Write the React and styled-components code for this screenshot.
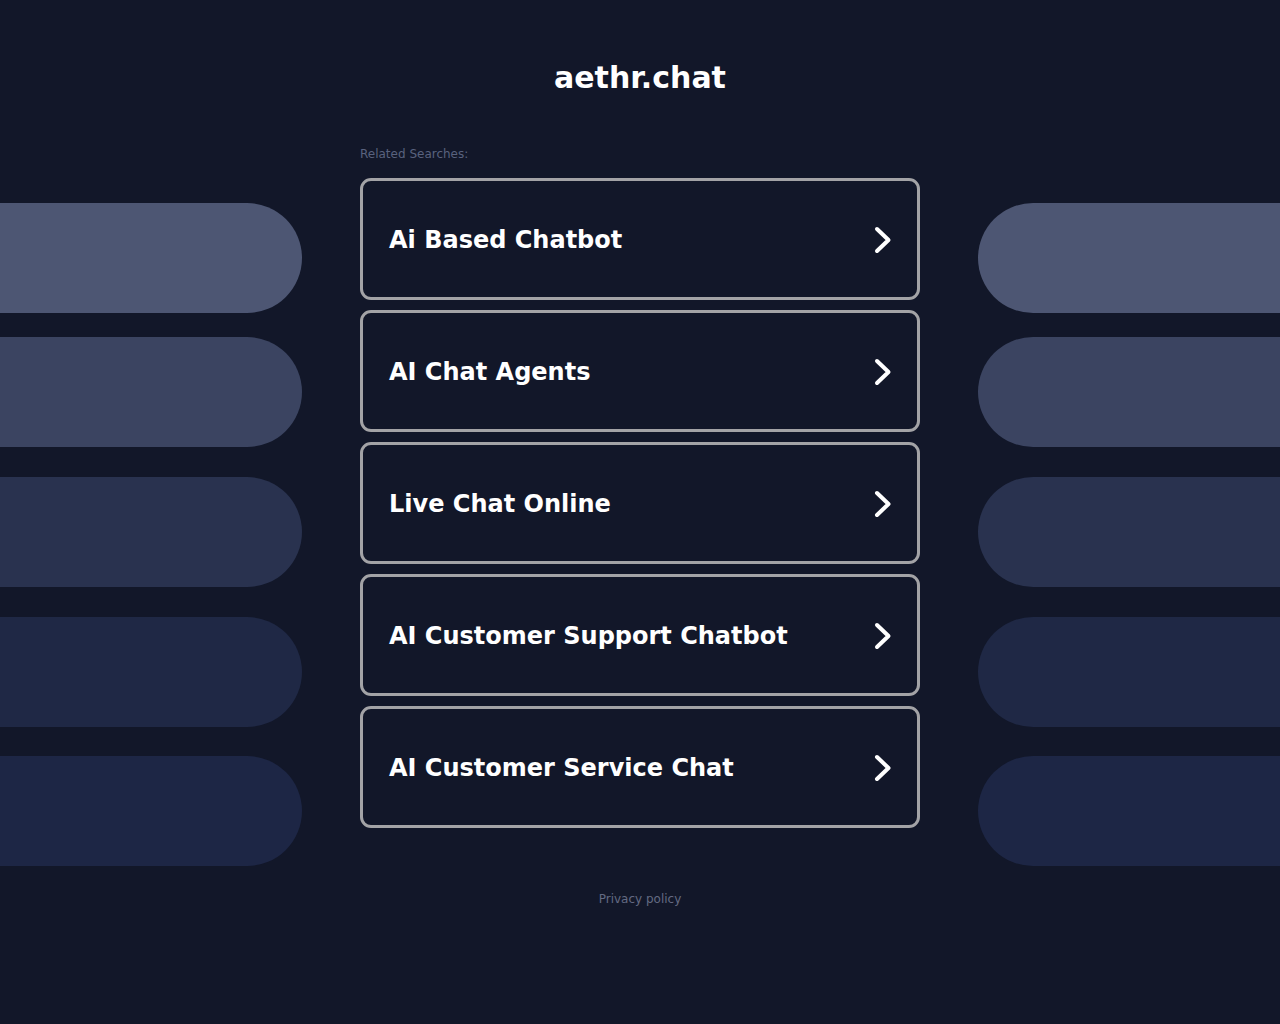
import React from "react"
import styled, { createGlobalStyle } from "styled-components"

const searches = [
  "Ai Based Chatbot",
  "AI Chat Agents",
  "Live Chat Online",
  "AI Customer Support Chatbot",
  "AI Customer Service Chat",
]

const pills = [
  { color: "#4d5673", gap: 0 },
  { color: "#3b4461", gap: 24 },
  { color: "#29324f", gap: 30 },
  { color: "#1f2845", gap: 30 },
  { color: "#1d2645", gap: 29 },
]

const Chevron = () => (
  <svg width="20" height="28" viewBox="0 0 20 28" fill="none">
    <path
      d="M4 3 L15.5 14 L4 25"
      stroke="#ffffff"
      strokeWidth="4"
      strokeLinecap="round"
      strokeLinejoin="round"
    />
  </svg>
)

const App = () => {
  return (
    <Page>
      <GlobalStyle />
      <Title>aethr.chat</Title>
      <Main>
        <PillColumn>
          {pills.map((p, i) => (
            <Pill key={i} $color={p.color} $gap={p.gap} $side="left" />
          ))}
        </PillColumn>
        <Center>
          <Label>Related Searches:</Label>
          <CardList>
            {searches.map((s) => (
              <Card key={s} href="#">
                <CardText>{s}</CardText>
                <Chevron />
              </Card>
            ))}
          </CardList>
        </Center>
        <PillColumn>
          {pills.map((p, i) => (
            <Pill key={i} $color={p.color} $gap={p.gap} $side="right" />
          ))}
        </PillColumn>
      </Main>
      <Footer>Privacy policy</Footer>
    </Page>
  )
}

export default App

const GlobalStyle = createGlobalStyle`
  html, body {
    margin: 0;
    padding: 0;
    background: #121729;
  }
  body {
    font-family: "DejaVu Sans", "Liberation Sans", sans-serif;
    min-height: 1024px;
  }
`

const Page = styled.div`
  padding-top: 59px;
  min-height: 1024px;
  box-sizing: border-box;
  background: #121729;
`

const Title = styled.h1`
  margin: 0;
  text-align: center;
  color: #ffffff;
  font-size: 30px;
  line-height: 38px;
  font-weight: bold;
`

const Main = styled.div`
  display: grid;
  grid-template-columns: 1fr 560px 1fr;
  column-gap: 58px;
  margin-top: 50px;
`

const PillColumn = styled.div`
  display: flex;
  flex-direction: column;
  padding-top: 56px;
`

const Pill = styled.div`
  height: 110px;
  margin-top: ${(p) => p.$gap}px;
  background: ${(p) => p.$color};
  border-radius: ${(p) => (p.$side === "left" ? "0 55px 55px 0" : "55px 0 0 55px")};
`

const Center = styled.div`
  display: flex;
  flex-direction: column;
`

const Label = styled.div`
  font-size: 12px;
  line-height: 14px;
  color: #59627e;
  margin-bottom: 17px;
`

const CardList = styled.div`
  display: flex;
  flex-direction: column;
  gap: 10px;
`

const Card = styled.a`
  display: flex;
  align-items: center;
  justify-content: space-between;
  box-sizing: border-box;
  height: 122px;
  padding: 2px 24px 0 26px;
  border: 3px solid #a3a3a6;
  border-radius: 11px;
  text-decoration: none;
  background: #121729;
`

const CardText = styled.span`
  color: #ffffff;
  font-size: 24px;
  font-weight: bold;
`

const Footer = styled.div`
  margin-top: 26px;
  text-align: center;
  font-size: 12px;
  line-height: 14px;
  color: #636a82;
`
